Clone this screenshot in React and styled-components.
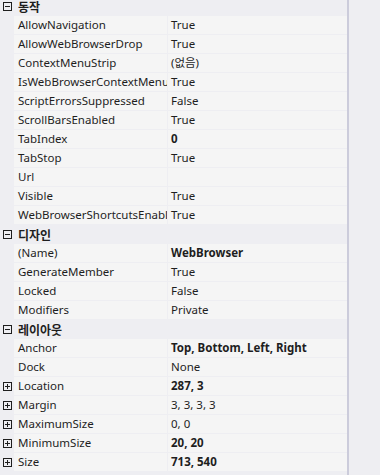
import React from "react";
import styled, { createGlobalStyle } from "styled-components";

const Global = createGlobalStyle`
  html, body { margin: 0; padding: 0; background: #eeeef2; }
  body { font-family: "Noto Sans", "Noto Sans CJK KR", sans-serif; }
`;

const Page = styled.div`
  display: flex;
  width: 380px;
  height: 475px;
  overflow: hidden;
  background: #eeeef2;
`;

const Grid = styled.div`
  width: 347px;
  border-right: 2px solid #ccccdb;
  display: grid;
  grid-auto-rows: 18px;
  row-gap: 1px;
  align-content: start;
  margin-top: -3px;
  padding-bottom: 20px;
`;

const Header = styled.div`
  height: 18px;
  display: flex;
  align-items: center;
  font-family: "Noto Sans CJK KR", sans-serif;
  font-weight: 700;
  font-size: 12px;
  color: #1e1e1e;
`;

const IconSlot = styled.div`
  width: 14px;
  flex: none;
  display: flex;
  align-items: center;
  padding-left: 3px;
  box-sizing: border-box;
`;

const HeaderLabel = styled.span`
  padding-left: 4px;
`;

const Row = styled.div`
  height: 18px;
  display: flex;
`;

const NameCell = styled.div`
  width: 153px;
  flex: none;
  background: #f5f5f5;
  padding-left: 4px;
  box-sizing: border-box;
  font-size: 11.5px;
  line-height: 18px;
  color: #1e1e1e;
  white-space: nowrap;
  overflow: hidden;
  margin-right: 1px;
`;

const ValueCell = styled.div`
  flex: 1;
  background: #f5f5f5;
  padding-left: 3px;
  font-size: 11.5px;
  line-height: 18px;
  color: #1e1e1e;
  white-space: nowrap;
  overflow: hidden;
  font-weight: ${(p) => (p.$bold ? 700 : 400)};
  font-family: "Noto Sans", "Noto Sans CJK KR", sans-serif;
`;

const Box = ({ plus }) => (
  <svg width="9" height="9" viewBox="0 0 9 9">
    <rect x="0.5" y="0.5" width="8" height="8" fill="none" stroke="#1e1e1e" />
    <line x1="2" y1="4.5" x2="7" y2="4.5" stroke="#1e1e1e" />
    {plus && <line x1="4.5" y1="2" x2="4.5" y2="7" stroke="#1e1e1e" />}
  </svg>
);

const data = [
  {
    title: "동작",
    rows: [
      ["AllowNavigation", "True"],
      ["AllowWebBrowserDrop", "True"],
      ["ContextMenuStrip", "(없음)"],
      ["IsWebBrowserContextMenuEnabled", "True"],
      ["ScriptErrorsSuppressed", "False"],
      ["ScrollBarsEnabled", "True"],
      ["TabIndex", "0", true],
      ["TabStop", "True"],
      ["Url", ""],
      ["Visible", "True"],
      ["WebBrowserShortcutsEnabled", "True"],
    ],
  },
  {
    title: "디자인",
    rows: [
      ["(Name)", "WebBrowser", true],
      ["GenerateMember", "True"],
      ["Locked", "False"],
      ["Modifiers", "Private"],
    ],
  },
  {
    title: "레이아웃",
    rows: [
      ["Anchor", "Top, Bottom, Left, Right", true],
      ["Dock", "None"],
      ["Location", "287, 3", true, true],
      ["Margin", "3, 3, 3, 3", false, true],
      ["MaximumSize", "0, 0", false, true],
      ["MinimumSize", "20, 20", true, true],
      ["Size", "713, 540", true, true],
    ],
  },
];

export default function App() {
  return (
    <Page>
      <Global />
      <Grid>
        {data.map((cat) => (
          <React.Fragment key={cat.title}>
            <Header>
              <IconSlot>
                <Box />
              </IconSlot>
              <HeaderLabel>{cat.title}</HeaderLabel>
            </Header>
            {cat.rows.map(([name, value, bold, expandable]) => (
              <Row key={name}>
                <IconSlot>{expandable && <Box plus />}</IconSlot>
                <NameCell>{name}</NameCell>
                <ValueCell $bold={bold}>{value}</ValueCell>
              </Row>
            ))}
          </React.Fragment>
        ))}
      </Grid>
    </Page>
  );
}
